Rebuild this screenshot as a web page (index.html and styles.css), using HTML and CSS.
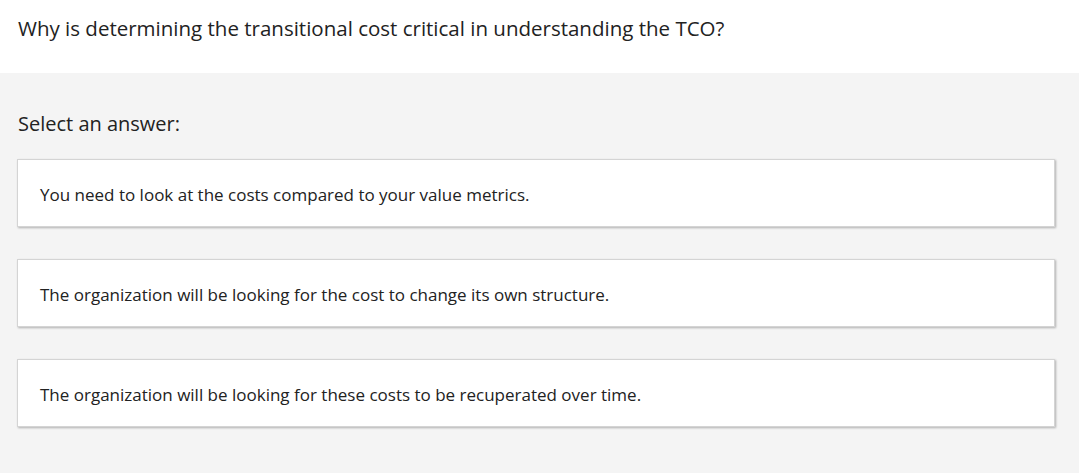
FILE: index.html
```html
<!DOCTYPE html>
<html>
<head>
<meta charset="utf-8">
<link rel="stylesheet" href="styles.css">
</head>
<body>
<header class="question">
  <h1 class="question-text">Why is determining the transitional cost critical in understanding the TCO?</h1>
</header>
<main class="answers">
  <h2 class="prompt">Select an answer:</h2>
  <div class="options">
    <div class="option">You need to look at the costs compared to your value metrics.</div>
    <div class="option">The organization will be looking for the cost to change its own structure.</div>
    <div class="option">The organization will be looking for these costs to be recuperated over time.</div>
  </div>
</main>
</body>
</html>
```
FILE: styles.css
```css
html, body {
  margin: 0;
  padding: 0;
  height: 100%;
}
body {
  font-family: "Segoe UI", "Open Sans", "Noto Sans", sans-serif;
  color: #222;
  background: #f4f4f4;
}
.question {
  background: #fff;
  height: 73px;
  padding: 0 18px;
  box-sizing: border-box;
}
.question-text {
  margin: 0;
  padding-top: 13px;
  font-size: 20.5px;
  font-weight: 400;
  line-height: 30px;
}
.answers {
  padding: 36px 24px 0 17px;
}
.prompt {
  margin: 0 0 0 1px;
  font-size: 20px;
  font-weight: 400;
  line-height: 30px;
}
.options {
  margin-top: 20px;
  display: flex;
  flex-direction: column;
  gap: 32px;
}
.option {
  background: #fff;
  border: 1px solid #d4d4d4;
  box-shadow: 1px 1px 2px rgba(0,0,0,0.28);
  height: 66px;
  display: flex;
  align-items: center;
  padding-left: 22px;
  padding-top: 2px;
  box-sizing: content-box;
  height: 64px;
  font-size: 17px;
}
```
